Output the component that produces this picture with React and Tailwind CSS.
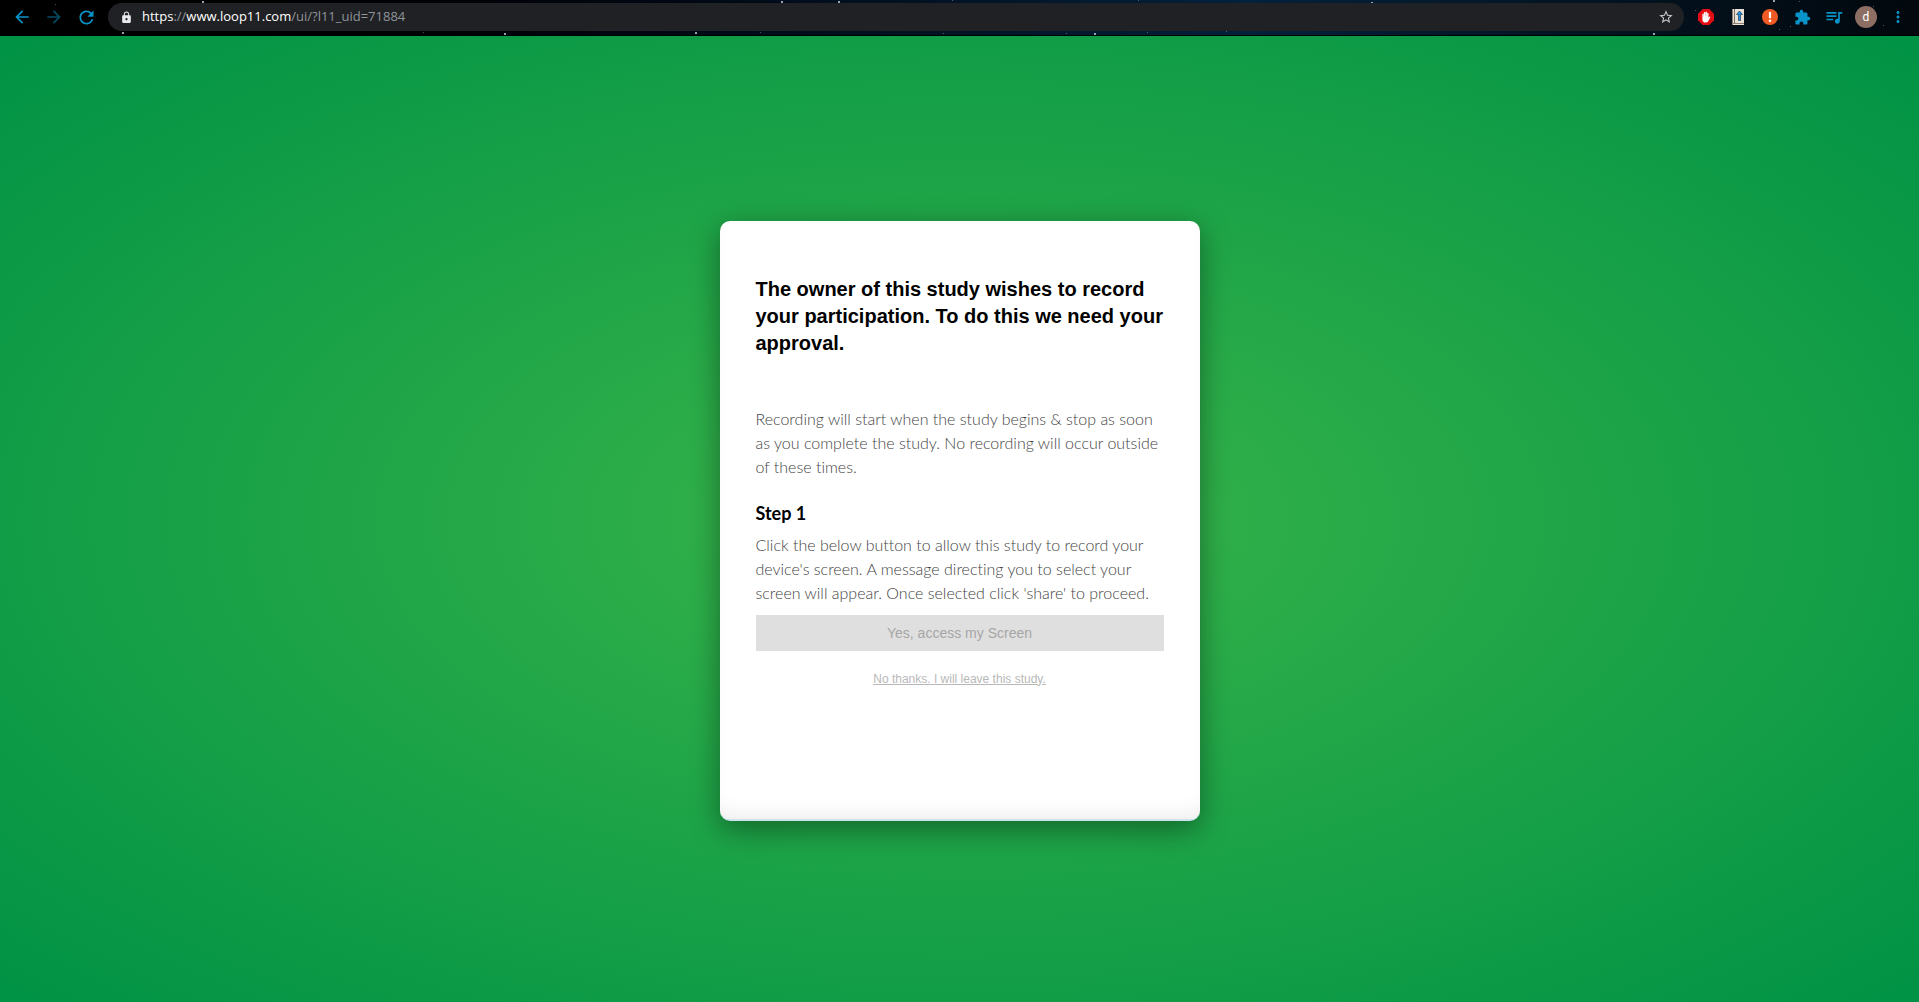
import React from "react";
import {
  MdArrowBack,
  MdArrowForward,
  MdRefresh,
  MdLock,
  MdStarBorder,
  MdExtension,
  MdQueueMusic,
  MdMoreVert,
} from "react-icons/md";

const STARS = [
  [122, 32, 2], [202, 1, 2], [423, 32, 1], [55, 4, 1], [504, 33, 2], [695, 32, 2], [760, 32, 1],
  [838, 1, 2], [781, 1, 2], [952, 0, 1], [943, 33, 1], [1066, 33, 1], [1094, 33, 2], [1138, 0, 1],
  [1147, 32, 1], [1226, 31, 1], [1371, 2, 2], [1653, 33, 2], [1773, 0, 2], [1799, 1, 1],
  [1790, 26, 1], [1779, 29, 1], [1883, 25, 1], [1695, 10, 1], [1701, 22, 1], [1873, 6, 1],
];

function StarField() {
  return (
    <svg className="absolute inset-0 h-full w-full" aria-hidden="true">
      {STARS.map(([x, y, s]) => (
        <rect key={x} x={x} y={y} width={s} height={s} fill="#b8ccd6" opacity={s === 2 ? 0.8 : 0.4} />
      ))}
    </svg>
  );
}

function StopHand() {
  return (
    <svg viewBox="0 0 16 16" className="size-4">
      <path d="M4.7 0h6.6L16 4.7v6.6L11.3 16H4.7L0 11.3V4.7z" fill="#e40d13" />
      <path
        d="M4.400 5.200c0-.9 1.300-.9 1.300 0v2.300h.2V3.600c0-.9 1.400-.9 1.400 0v3.700h.2V3.200c0-.9 1.400-.9 1.400 0v4.100h.2V4.400c0-.9 1.400-.9 1.400 0v4.400l.6-.9c.5-.7 1.400-.2 1.100.5l-1.500 3.200c-.5 1.300-1.400 2-2.900 2-2.200 0-3.400-1.300-3.400-3.200z"
        fill="#fff"
      />
    </svg>
  );
}

function Journal() {
  return (
    <svg viewBox="0 0 14 16" className="h-4 w-3.5">
      <path d="M1 0h12v16H1z" fill="#e9e1d6" />
      <path d="M1 0h1v16H1z" fill="#8c7f76" />
      <path d="M3 0h1v14H3z" fill="#7b6e66" />
      <path d="M2 14h11v1H2z" fill="#8c7f76" />
      <path d="M8.500 2 11.500 5.500H9.500V11.500H7.500V5.500H5.500z" fill="#2492e0" stroke="#1b3c5c" strokeWidth=".7" />
    </svg>
  );
}

function Alert() {
  return (
    <svg viewBox="0 0 16 16" className="size-4">
      <circle cx="8" cy="8" r="8" fill="#f15a24" />
      <path d="M6.900 3h2.200v6.200H6.900z" fill="#fff" />
      <circle cx="8" cy="11.800" r="1.300" fill="#fff" />
    </svg>
  );
}

function IconButton({ label, children, className = "" }) {
  return (
    <button type="button" aria-label={label} className={"flex size-8 items-center justify-center text-[#0a93c9] " + className}>
      {children}
    </button>
  );
}

function Toolbar() {
  return (
    <header className="relative h-9 border-b border-black bg-linear-to-r from-black via-[#04213a] via-65% to-[#02080d]">
      <StarField />
      <div className="relative flex h-full items-center pr-[5px] pb-px pl-1.5">
        <IconButton label="Back"><MdArrowBack size={20} /></IconButton>
        <IconButton label="Forward" className="opacity-50"><MdArrowForward size={20} /></IconButton>
        <IconButton label="Reload"><MdRefresh size={21} /></IconButton>
        <div className="ml-1.5 flex h-7 flex-1 items-center rounded-full bg-[#202124] pr-2.5 pl-3">
          <MdLock size={13} className="text-[#e8eaed]" />
          <div className="ml-[9px] flex-1 font-['Open_Sans',sans-serif] text-[13px] text-[#8f9499]">
            <span className="text-white">https</span>://<span className="text-white">www.loop11.com</span>/ui/?l11_uid=71884
          </div>
          <button type="button" aria-label="Bookmark this page" className="text-[#c8cacd]">
            <MdStarBorder size={16} />
          </button>
        </div>
        <nav className="ml-1.5 flex items-center">
          <IconButton label="Ad blocker"><StopHand /></IconButton>
          <IconButton label="Reader"><Journal /></IconButton>
          <IconButton label="Alerts"><Alert /></IconButton>
          <IconButton label="Extensions"><MdExtension size={17} /></IconButton>
          <IconButton label="Media"><MdQueueMusic size={20} /></IconButton>
          <IconButton label="Profile">
            <span className="flex size-[22px] items-center justify-center rounded-full bg-[#8d6e63] font-[Roboto,sans-serif] text-xs text-white">d</span>
          </IconButton>
          <IconButton label="Menu"><MdMoreVert size={18} /></IconButton>
        </nav>
      </div>
    </header>
  );
}

export default function App() {
  return (
    <div className="flex min-h-screen flex-col">
      <Toolbar />
      <main className="flex flex-1 items-center justify-center bg-[radial-gradient(#39b54a,#009245)] pt-1 pb-px">
        <section className="flex min-h-[600px] w-[480px] flex-col rounded-[10px] border-b-2 border-[#cfe3ec] bg-white px-9 pt-[55px] pb-10 font-[Lato,sans-serif] text-base leading-6 font-light text-[#444] shadow-[0_8px_30px_rgba(0,0,0,0.4),inset_0_-16px_20px_-12px_rgba(0,0,0,0.08)] [font-variant-ligatures:none]">
          <h1 className="font-['Liberation_Sans',Arial,sans-serif] text-xl leading-[27px] font-bold text-black">
            The owner of this study wishes to record your participation. To do this we need your approval.
          </h1>
          <p className="mt-[50px]">
            Recording will start when the study begins &amp; stop as soon as you complete the study. No recording will occur outside of these times.
          </p>
          <h2 className="mt-[22px] text-lg leading-6 font-bold text-black">Step 1</h2>
          <p className="mt-2">
            Click the below button to allow this study to record your device&apos;s screen. A message directing you to select your screen will appear. Once selected click &apos;share&apos; to proceed.
          </p>
          <button type="button" disabled className="mt-2.5 h-9 bg-[#dfdfdf] font-['Liberation_Sans',Arial,sans-serif] text-sm font-normal text-[#a6a6a6]">
            Yes, access my Screen
          </button>
          <a href="#leave" className="mt-5 self-center font-['Liberation_Sans',Arial,sans-serif] text-xs leading-4 font-normal text-[#b8b8b8] underline">
            No thanks. I will leave this study.
          </a>
        </section>
      </main>
    </div>
  );
}
